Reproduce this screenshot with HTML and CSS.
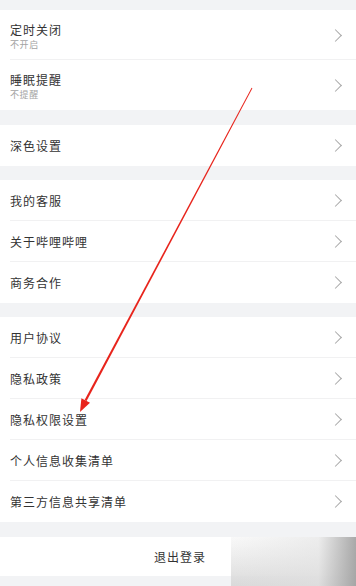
FILE: index.html
```html
<!DOCTYPE html>
<html lang="zh">
<head>
<meta charset="utf-8">
<link rel="stylesheet" href="styles.css">
</head>
<body>
<div class="page">
  <div class="gap gap-top"></div>
  <div class="section">
    <div class="row row-tall"><div class="texts"><div class="title">定时关闭</div><div class="sub">不开启</div></div><span class="chev"></span></div>
    <div class="row row-tall last"><div class="texts"><div class="title">睡眠提醒</div><div class="sub">不提醒</div></div><span class="chev"></span></div>
  </div>
  <div class="gap"></div>
  <div class="section">
    <div class="row last"><div class="title">深色设置</div><span class="chev"></span></div>
  </div>
  <div class="gap gap-s"></div>
  <div class="section">
    <div class="row"><div class="title">我的客服</div><span class="chev"></span></div>
    <div class="row"><div class="title">关于哔哩哔哩</div><span class="chev"></span></div>
    <div class="row last"><div class="title">商务合作</div><span class="chev"></span></div>
  </div>
  <div class="gap gap-s"></div>
  <div class="section">
    <div class="row"><div class="title">用户协议</div><span class="chev"></span></div>
    <div class="row"><div class="title">隐私政策</div><span class="chev"></span></div>
    <div class="row"><div class="title">隐私权限设置</div><span class="chev"></span></div>
    <div class="row"><div class="title">个人信息收集清单</div><span class="chev"></span></div>
    <div class="row last"><div class="title">第三方信息共享清单</div><span class="chev"></span></div>
  </div>
  <div class="gap"></div>
  <div class="section">
    <div class="logout">退出登录</div>
  </div>
  <div class="shade"></div>
  <svg class="arrow" width="356" height="586" viewBox="0 0 356 586">
    <polygon points="252.4,88.2 251.6,87.8 84.6,400.1 86.6,401.1" fill="#e8241c"/>
    <polygon points="80,412 90,402.8 81.4,398.2" fill="#e8241c"/>
  </svg>
</div>
</body>
</html>
```
FILE: styles.css
```css
* { box-sizing: border-box; margin: 0; padding: 0; }
html, body { width: 356px; height: 586px; overflow: hidden; }
body { background: #f2f3f5; font-family: "Noto Sans CJK SC", "Noto Sans", sans-serif; color: #333; }
.page { position: relative; width: 356px; height: 586px; display: flex; flex-direction: column; }
.gap { height: 15px; flex: none; }
.gap-top { height: 10px; }
.gap-s { height: 14px; }
.section { background: #fff; display: flex; flex-direction: column; }
.row { height: 41px; display: flex; align-items: center; justify-content: space-between; padding-left: 10px; padding-right: 14px; position: relative; }
.row::after { content: ""; position: absolute; left: 10px; right: 0; bottom: 0; height: 1px; background: #f1f1f2; }
.row.last::after { display: none; }
.row-tall { height: 50px; }
.texts { display: flex; flex-direction: column; gap: 1px; padding-top: 1px; }
.title { font-size: 12px; letter-spacing: 1px; line-height: 16px; color: #333; }
.sub { font-size: 9px; letter-spacing: 0.6px; line-height: 11px; color: #a3a3a3; }
.chev { width: 9px; height: 9px; border-top: 1.3px solid #a8a8a8; border-right: 1.3px solid #a8a8a8; transform: rotate(45deg); margin-right: 2px; }
.logout { height: 39px; display: flex; align-items: center; justify-content: center; font-size: 12px; letter-spacing: 1px; color: #333; padding-left: 4px; }
.shade { position: absolute; left: 231px; top: 537px; width: 125px; height: 49px; background: linear-gradient(90deg, rgba(235,235,235,0) 0%, rgba(225,225,225,0.5) 70%, rgba(160,160,160,0.9) 100%), linear-gradient(180deg, rgba(245,245,245,0.6), rgba(215,215,215,0.9)); }
.arrow { position: absolute; left: 0; top: 0; }
```
